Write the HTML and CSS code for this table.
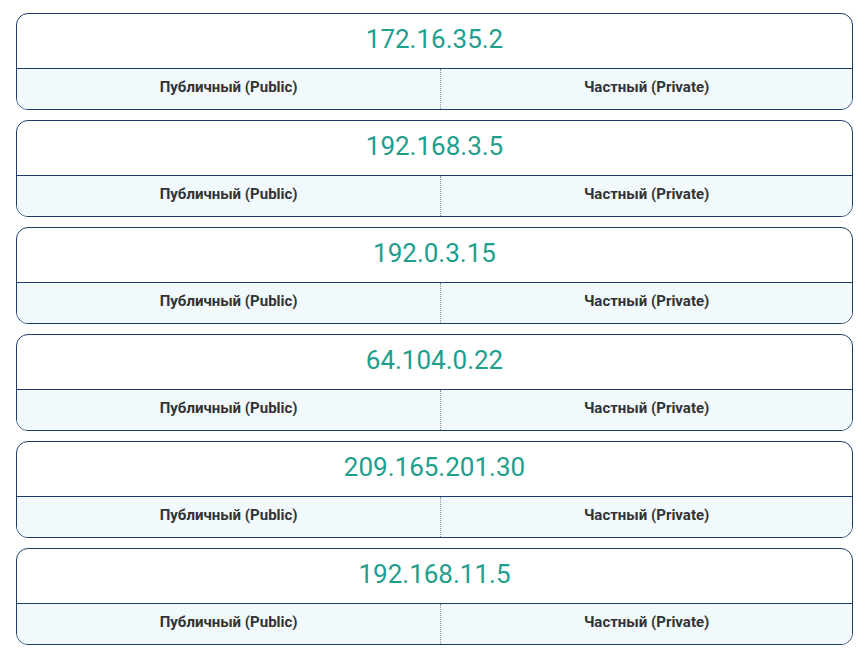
FILE: index.html
```html
<!DOCTYPE html>
<html lang="ru">
<head>
<meta charset="utf-8">
<link rel="stylesheet" href="styles.css">
</head>
<body>
<div class="list">
  <div class="card">
    <div class="ip">172.16.35.2</div>
    <div class="opts"><div class="opt">Публичный (Public)</div><div class="opt">Частный (Private)</div></div>
  </div>
  <div class="card">
    <div class="ip">192.168.3.5</div>
    <div class="opts"><div class="opt">Публичный (Public)</div><div class="opt">Частный (Private)</div></div>
  </div>
  <div class="card">
    <div class="ip">192.0.3.15</div>
    <div class="opts"><div class="opt">Публичный (Public)</div><div class="opt">Частный (Private)</div></div>
  </div>
  <div class="card">
    <div class="ip">64.104.0.22</div>
    <div class="opts"><div class="opt">Публичный (Public)</div><div class="opt">Частный (Private)</div></div>
  </div>
  <div class="card">
    <div class="ip">209.165.201.30</div>
    <div class="opts"><div class="opt">Публичный (Public)</div><div class="opt">Частный (Private)</div></div>
  </div>
  <div class="card">
    <div class="ip">192.168.11.5</div>
    <div class="opts"><div class="opt">Публичный (Public)</div><div class="opt">Частный (Private)</div></div>
  </div>
</div>
</body>
</html>
```
FILE: styles.css
```css
html, body {
  margin: 0;
  padding: 0;
  background: #ffffff;
}
body {
  font-family: Roboto, "Liberation Sans", sans-serif;
}
.list {
  display: flex;
  flex-direction: column;
  gap: 10px;
  padding: 13px 12px 0 16px;
}
.card {
  border: 1px solid #1d3d66;
  border-radius: 12px;
  overflow: hidden;
  background: #ffffff;
}
.ip {
  height: 55px;
  box-sizing: border-box;
  padding-bottom: 4px;
  display: flex;
  align-items: center;
  justify-content: center;
  font-size: 26px;
  color: #1e9e8c;
  border-bottom: 1px solid #1d3d66;
}
.opts {
  display: flex;
  background: #f1f9fc;
  height: 40px;
}
.opt {
  flex: 1 1 auto;
  display: flex;
  align-items: center;
  justify-content: center;
  padding-bottom: 4px;
  box-sizing: border-box;
  font-size: 15px;
  font-weight: 700;
  color: #333333;
}
.opt + .opt {
  border-left: 1px dotted #8a9299;
}
```
